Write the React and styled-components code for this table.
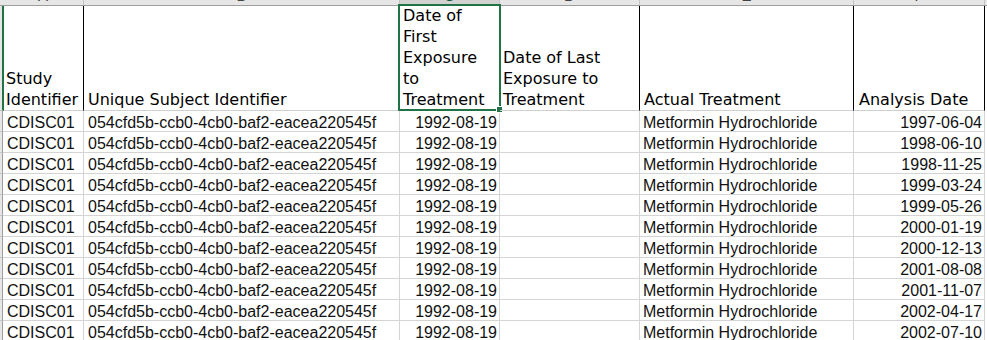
import React from 'react';
import styled, { createGlobalStyle } from 'styled-components';

const GlobalStyle = createGlobalStyle`
  html, body { margin: 0; padding: 0; background: #ffffff; overflow: hidden; }
  body { width: 987px; height: 340px; }
`;

const Sheet = styled.div`
  width: 987px;
  height: 340px;
  overflow: hidden;
  background: #ffffff;
`;

const Grid = styled.div`
  margin-top: -15px;
  display: flex;
  flex-direction: column;
`;

const Row = styled.div`
  display: flex;
  flex: none;
`;

const ColStrip = styled.div`
  display: flex;
  height: 21px;
  box-sizing: border-box;
  border-bottom: 1px solid #9e9e9e;
  background: #e6e6e6;
`;

const Corner = styled.div`
  width: 3px;
  flex: none;
`;

const ColLetter = styled.div`
  width: ${(p) => p.$w}px;
  flex: none;
  box-sizing: border-box;
  border-right: 1px solid #c4c4c4;
  background: ${(p) => (p.$selected ? '#d2d2d2' : '#e6e6e6')};
  color: ${(p) => (p.$selected ? '#185c37' : '#444444')};
  font-family: 'Liberation Sans', Arial, sans-serif;
  font-size: 15px;
  line-height: 18px;
  padding-top: 2px;
  text-align: center;
`;

const RowHead = styled.div`
  width: ${(p) => (p.$active ? 4 : 3)}px;
  flex: none;
  box-sizing: border-box;
  background: #e6e6e6;
  border-right: ${(p) => (p.$active ? '2px solid #217346' : '1px solid #9e9e9e')};
  border-bottom: 1px solid #c4c4c4;
`;

const HeaderCell = styled.div`
  position: relative;
  width: ${(p) => p.$w}px;
  height: 105px;
  flex: none;
  box-sizing: border-box;
  border-right: 1px solid #000000;
  border-bottom: 1px solid #d0d0d0;
  padding: 0 2px 0 ${(p) => p.$pl}px;
  display: flex;
  flex-direction: column;
  justify-content: flex-end;
  font-family: 'DejaVu Sans', Verdana, sans-serif;
  font-size: 16px;
  line-height: 21px;
  color: #000000;
  white-space: nowrap;
`;

const HeaderLine = styled.span`
  display: block;
`;

const Selection = styled.div`
  position: absolute;
  left: -2px;
  top: -2px;
  width: 103px;
  height: 107px;
  box-sizing: border-box;
  border: 2px solid #217346;
  pointer-events: none;
`;

const FillHandle = styled.div`
  position: absolute;
  left: 96px;
  top: 100px;
  width: 7px;
  height: 7px;
  box-sizing: border-box;
  background: #217346;
  border: 1px solid #ffffff;
`;

const DataCell = styled.div`
  width: ${(p) => p.$w}px;
  height: 21px;
  flex: none;
  box-sizing: border-box;
  border-right: 1px solid #d4d4d4;
  border-bottom: 1px solid #d4d4d4;
  padding: 3px ${(p) => p.$pr}px 0 ${(p) => p.$pl}px;
  font-family: 'Liberation Sans', Arial, sans-serif;
  font-size: 16px;
  line-height: 17px;
  color: #111111;
  text-align: ${(p) => p.$align};
  white-space: nowrap;
  overflow: hidden;
`;

const cols = [
  { key: 'A', w: 81, lines: ['Study', 'Identifier'], pl: 3, dpl: 4, align: 'left' },
  { key: 'B', w: 316, lines: ['Unique Subject Identifier'], pl: 4, dpl: 4, align: 'left' },
  { key: 'C', w: 100, lines: ['Date of', 'First', 'Exposure', 'to', 'Treatment'], pl: 3, dpl: 3, align: 'right' },
  { key: 'D', w: 140, lines: ['Date of Last', 'Exposure to', 'Treatment'], pl: 3, dpl: 3, align: 'left' },
  { key: 'E', w: 214, lines: ['Actual Treatment'], pl: 4, dpl: 3, align: 'left' },
  { key: 'F', w: 131, lines: ['Analysis Date'], pl: 5, dpl: 3, align: 'right' },
];

const analysisDates = [
  '1997-06-04',
  '1998-06-10',
  '1998-11-25',
  '1999-03-24',
  '1999-05-26',
  '2000-01-19',
  '2000-12-13',
  '2001-08-08',
  '2001-11-07',
  '2002-04-17',
  '2002-07-10',
];

const rows = analysisDates.map((d) => ({
  A: 'CDISC01',
  B: '054cfd5b-ccb0-4cb0-baf2-eacea220545f',
  C: '1992-08-19',
  D: '',
  E: 'Metformin Hydrochloride',
  F: d,
}));

export default function App() {
  return (
    <>
      <GlobalStyle />
      <Sheet>
        <Grid>
          <ColStrip>
            <Corner />
            {cols.map((c) => (
              <ColLetter key={c.key} $w={c.w} $selected={c.key === 'C'}>
                {c.key}
              </ColLetter>
            ))}
          </ColStrip>
          <Row>
            <RowHead $active />
            {cols.map((c, i) => (
              <HeaderCell key={c.key} $w={i === 0 ? c.w - 1 : c.w} $pl={i === 0 ? c.pl - 1 : c.pl}>
                {c.lines.map((l) => (
                  <HeaderLine key={l}>{l}</HeaderLine>
                ))}
                {c.key === 'C' && (
                  <>
                    <Selection />
                    <FillHandle />
                  </>
                )}
              </HeaderCell>
            ))}
          </Row>
          {rows.map((r, ri) => (
            <Row key={ri}>
              <RowHead />
              {cols.map((c) => (
                <DataCell key={c.key} $w={c.w} $align={c.align} $pl={c.dpl} $pr={2}>
                  {r[c.key]}
                </DataCell>
              ))}
            </Row>
          ))}
        </Grid>
      </Sheet>
    </>
  );
}
